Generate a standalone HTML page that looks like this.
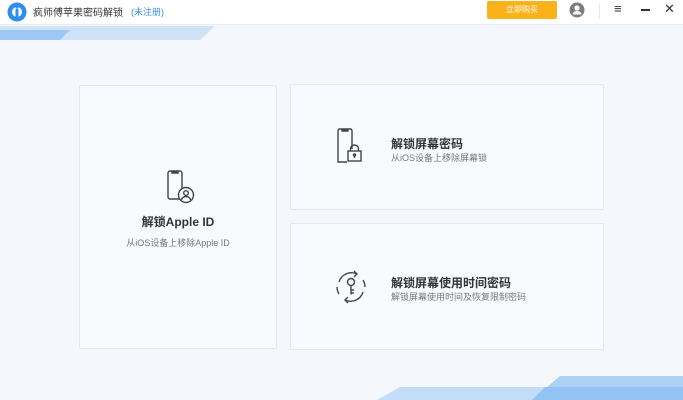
<!DOCTYPE html>
<html><head><meta charset="utf-8"><style>
*{margin:0;padding:0;box-sizing:border-box}
body{width:683px;height:400px;overflow:hidden;background:#f4f8fc;font-family:"Liberation Sans","Noto Sans CJK SC",sans-serif;position:relative}
.top{position:absolute;left:0;top:0;width:683px;height:25px;background:#fff;border-bottom:1px solid #e8edf3}
.card{position:absolute;background:#f8fbfe;border:1px solid #e3e8ef;border-radius:2px}
.t{font-size:12px;font-weight:bold;color:#333}
.s{font-size:9px;color:#777}
</style></head><body>
<svg style="position:absolute;left:0;top:0" width="683" height="400">
<polygon points="0,26 215,26 200,40 0,40" fill="#cfe2f8"/>
<polygon points="0,30 70,30 60,40 0,40" fill="#9ec8f3"/>
<polygon points="400,387 683,387 683,400 377,400" fill="#c3dcf8"/>
<polygon points="560,376 683,376 683,400 532,400" fill="#aed1f6"/>
<polygon points="545,387 683,387 683,400 532,400" fill="#93c2f5"/>
</svg>
<div class="top"></div>
<svg style="position:absolute;left:7px;top:2px" width="20" height="20" viewBox="0 0 20 20"><circle cx="10" cy="10" r="9.5" fill="#2e8ef0"/><circle cx="10" cy="10" r="5" fill="#fff"/><rect x="8.5" y="7" width="3" height="9" fill="#2e8ef0"/><circle cx="10" cy="5.5" r="1.3" fill="#2e8ef0"/></svg>
<div style="position:absolute;left:33px;top:4px;font-size:10px;color:#333">疯师傅苹果密码解锁</div>
<div style="position:absolute;left:131px;top:5px;font-size:9px;color:#3b8de8">(未注册)</div>
<div style="position:absolute;left:487px;top:1px;width:70px;height:18px;background:#fbb21a;border-radius:2px;color:#fff;font-size:8px;text-align:center;line-height:18px">立即购买</div>
<svg style="position:absolute;left:569px;top:2px" width="16" height="16" viewBox="0 0 16 16"><circle cx="8" cy="8" r="7.5" fill="#7d7d7d"/><circle cx="8" cy="6" r="2.6" fill="#fff"/><path d="M3.5 12.5a4.5 3.5 0 0 1 9 0" fill="#fff"/></svg>
<div style="position:absolute;left:599px;top:3px;width:1px;height:16px;background:#e6e6e6"></div>
<div style="position:absolute;left:614px;top:1px;font-size:13px;color:#333">≡</div>
<div style="position:absolute;left:641px;top:9px;width:9px;height:1.5px;background:#333"></div>
<div style="position:absolute;left:664px;top:1px;font-size:13px;color:#333">✕</div>

<div class="card" style="left:79px;top:85px;width:198px;height:264px"></div>
<div class="card" style="left:290px;top:84px;width:314px;height:126px"></div>
<div class="card" style="left:290px;top:223px;width:314px;height:127px"></div>

<svg style="position:absolute;left:165px;top:170px" width="32" height="34" viewBox="0 0 32 34" fill="none" stroke="#444" stroke-width="1.4"><rect x="3" y="1" width="14" height="28" rx="2"/><path d="M7 1.5h6v1.5h-6z"/><circle cx="21" cy="25" r="7.5" fill="#f8fbfe"/><circle cx="21" cy="23" r="2.3"/><path d="M16.5 30a4.5 3.5 0 0 1 9 0"/></svg>
<div class="t" style="position:absolute;left:79px;width:198px;text-align:center;top:213px">解锁Apple ID</div>
<div class="s" style="position:absolute;left:79px;width:198px;text-align:center;top:236px">从iOS设备上移除Apple ID</div>

<svg style="position:absolute;left:335px;top:128px" width="34" height="36" viewBox="0 0 34 36" fill="none" stroke="#444" stroke-width="1.4"><path d="M12 34H3V3q0-2 2-2h10q2 0 2 2v18"/><path d="M7 1.5h6v1.5h-6z"/><rect x="13" y="23" width="13" height="10"/><path d="M15.5 23v-2a4 4 0 0 1 8 0v2"/><circle cx="19.5" cy="27" r="1"/><path d="M19.5 28v2"/></svg>
<div class="t" style="position:absolute;left:391px;top:135px">解锁屏幕密码</div>
<div class="s" style="position:absolute;left:391px;top:151px">从iOS设备上移除屏幕锁</div>

<svg style="position:absolute;left:334px;top:270px" width="34" height="34" viewBox="0 0 34 34" fill="none" stroke="#444" stroke-width="1.4"><path d="M5 12a13 13 0 0 1 18-8"/><path d="M20 1l3 3-3 3"/><path d="M29 22a13 13 0 0 1-18 8"/><path d="M14 33l-3-3 3-3"/><path d="M3 17a14 14 0 0 0 2 7M31 17a14 14 0 0 0-2-7"/><circle cx="17" cy="12" r="3.5"/><path d="M17 15.5v9M17 20h3M17 23h3"/></svg>
<div class="t" style="position:absolute;left:391px;top:274px">解锁屏幕使用时间密码</div>
<div class="s" style="position:absolute;left:391px;top:290px">解锁屏幕使用时间及恢复限制密码</div>
</body></html>
